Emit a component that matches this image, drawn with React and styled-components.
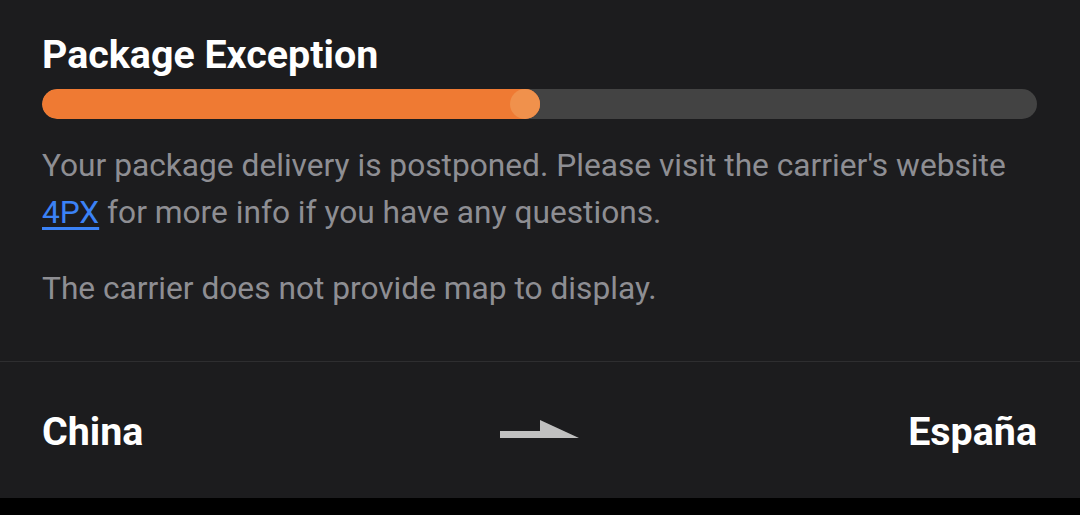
import styled, { createGlobalStyle } from 'styled-components';

const Global = createGlobalStyle`
  body {
    margin: 0;
    background: #000;
    font-family: Roboto, "Liberation Sans", sans-serif;
  }
`

const Card = styled.div`
  background: #1c1c1e;
  width: 1080px;
`

const Top = styled.div`
  padding: 32px 43px 0 42px;
  height: 362px;
  box-sizing: border-box;
  border-bottom: 1px solid #2e2e30;
`

const Title = styled.div`
  color: #fff;
  font-size: 39.4px;
  font-weight: 700;
  line-height: 46px;
`

const Track = styled.div`
  margin-top: 11px;
  height: 30px;
  border-radius: 15px;
  background: #434343;
  overflow: hidden;
  display: flex;
`

const Fill = styled.div`
  height: 100%;
  background: #ef7a33;
  border-radius: 15px;
  display: flex;
  justify-content: flex-end;
`

const Knob = styled.div`
  width: 30px;
  height: 30px;
  border-radius: 50%;
  background: #f0914c;
`

const Text = styled.p`
  margin: ${p => p.$top}px 0 0;
  color: #8e8e93;
  font-size: 31.7px;
  line-height: 47px;
`

const Link = styled.a`
  color: #3b82f6;
  text-decoration: underline;
  text-underline-offset: 4px;
`

const Route = styled.div`
  height: 136px;
  padding: 0 43px 0 42px;
  display: flex;
  align-items: center;
  justify-content: space-between;
`

const Place = styled.div`
  color: #fff;
  font-size: 39.4px;
  font-weight: 700;
  width: 200px;
  padding-top: 3px;
  text-align: ${p => p.$align};
`

function Arrow() {
  return (
    <svg width="80" height="20" viewBox="0 0 80 20">
      <path d="M0 11 H40 V0 L79 18 H0 Z" fill="#c0c0c0" />
    </svg>
  )
}

export default function App() {
  const progress = 50;
  return (
    <>
      <Global />
      <Card>
        <Top>
          <Title>Package Exception</Title>
          <Track>
            <Fill style={{ width: `${progress}%` }}>
              <Knob />
            </Fill>
          </Track>
          <Text $top={23}>
            Your package delivery is postponed. Please visit the carrier's website{' '}
            <Link href="#">4PX</Link> for more info if you have any questions.
          </Text>
          <Text $top={29}>The carrier does not provide map to display.</Text>
        </Top>
        <Route>
          <Place $align="left">China</Place>
          <Arrow />
          <Place $align="right">España</Place>
        </Route>
      </Card>
    </>
  )
}
